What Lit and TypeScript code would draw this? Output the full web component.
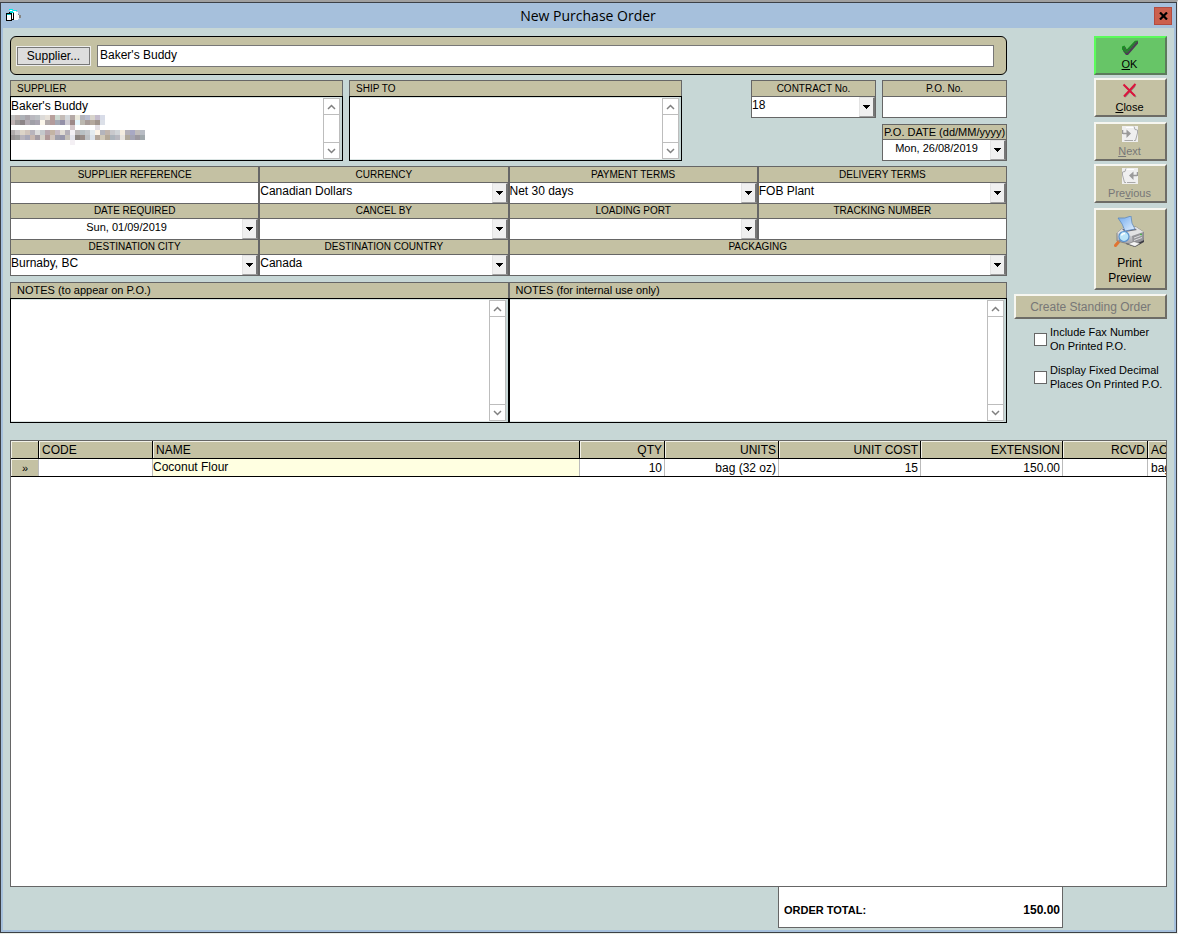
import { LitElement, html, css, svg, nothing } from "lit";
import { customElement, property } from "lit/decorators.js";

const arrow = html`<svg class="tri" width="7" height="4" viewBox="0 0 7 4" shape-rendering="crispEdges" aria-hidden="true"><path d="M0 0h7v1H0zM1 1h5v1H1zM2 2h3v1H2zM3 3h1v1H3z" fill="#000" /></svg>`;

const fieldBase = css`
  :host { display: block; font: 12px/14px "Liberation Sans", Arial, sans-serif; color: #000; }
  * { box-sizing: border-box; }
  input, select, textarea, button { font: inherit; color: inherit; margin: 0; border: 0; border-radius: 0; outline: 0; background: none; }
`;

/** Captioned single-line field: plain text, combo box or date box. */
@customElement("po-field")
export class PoField extends LitElement {
  @property() label = "";
  @property() value = "";
  @property() kind: "text" | "combo" | "date" = "text";
  static styles = [fieldBase, css`
    .cell { border: 1px solid #666; border-bottom: 0; background: #fff; height: 100%; display: flex; flex-direction: column; }
    label { display: block; flex: 1; min-height: 14px; padding-top: var(--caption-pad, 0); background: #c4c1a3; border-bottom: 1px solid #666; font-size: 10px; line-height: 14px; text-align: center; white-space: nowrap; }
    .mixed { font-size: 11px; }
    .line { display: flex; height: 20px; position: relative; }
    input, select { flex: 1; min-width: 0; width: 100%; height: 20px; padding: 0 0 4px 0; appearance: none; }
    .date { text-align: center; font-size: 11px; padding-bottom: 5px; }
    .drop { width: 16px; height: 20px; padding: 0; background: #f0f0f0; border: 1px solid #e3e3e3; border-right: 2px solid #777; border-bottom-color: #a0a0a0; display: grid; place-items: center; }
    .over { position: absolute; right: 0; top: 0; pointer-events: none; }
  `];
  render() {
    const cap = html`<label for="f" class=${/[a-z]{3}/.test(this.label) ? "mixed" : ""}>${this.label}</label>`;
    let body;
    if (this.kind === "combo") body = html`<select id="f"><option>${this.value}</option></select><span class="drop over">${arrow}</span>`;
    else if (this.kind === "date") body = html`<input id="f" class="date" .value=${this.value} /><button class="drop" type="button" aria-label="Open calendar">${arrow}</button>`;
    else body = html`<input id="f" .value=${this.value} />`;
    return html`<div class="cell">${cap}<div class="line">${body}</div></div>`;
  }
}

/** Captioned multi-line box with its own scroll bar. */
@customElement("po-memo")
export class PoMemo extends LitElement {
  @property() label = "";
  @property() value = "";
  @property({ type: Boolean }) mixed = false;
  static styles = [fieldBase, css`
    :host { display: flex; flex-direction: column; }
    label { display: block; height: 16px; padding-left: 6px; background: #c4c1a3; border: 1px solid #666; border-bottom: 0; font-size: 10px; line-height: 15px; }
    .mixed { font-size: 11px; }
    .box { flex: 1; display: flex; position: relative; border: 1px solid #000; background: #fff; padding: 1px 0; box-shadow: inset -2px 0 #c7d7d6, inset 0 1px #dbe5e4, inset 0 -1px #dbe5e4; }
    textarea { flex: 1; min-width: 0; padding: 1px 0 0 0; resize: none; overflow: hidden; line-height: 15px; }
    .bar { width: 17px; margin-right: 2px; border: 1px solid #bdbdbd; display: flex; flex-direction: column; justify-content: space-between; background: #fff; }
    .bar button { height: 16px; padding: 0; display: grid; place-items: center; border-bottom: 1px solid #bdbdbd; }
    .bar .down { border-bottom: 0; border-top: 1px solid #bdbdbd; }
    ::slotted(svg) { position: absolute; left: 0; top: 18px; }
  `];
  render() {
    const chev = (d: string) => html`<svg width="9" height="6" viewBox="0 0 9 6"><path d=${d} fill="none" stroke="#808080" stroke-width="1.5" /></svg>`;
    return html`<label for="m" class=${this.mixed ? "mixed" : ""}>${this.label}</label>
      <div class="box"><textarea id="m" .value=${this.value}></textarea>
        <div class="bar"><button type="button" aria-label="Scroll up">${chev("M1 5L4.5 1.5L8 5")}</button><button class="down" type="button" aria-label="Scroll down">${chev("M1 1L4.5 4.5L8 1")}</button></div>
        <slot></slot></div>`;
  }
}

const mosaicRows: [number, string][] = [
  [0, "bdbdbd b8b0ae aeb2b8 a9a5ab bab9c0 bcc0c4 dcdad8 e6e0d8 b8a09c ccd8d0 c4bcb8 d3d8dc b5a9a6 ebe9dc b4b4bc b9bdd0 d8d4cc c4bccc d8dce8"],
  [5, "c0b4b4 9c9898 8d8588 b4acb4 a0a0a8 a8a4b0 fbf7ec b0a8a8 b49c9c a4a8b4 9490a8 d0ccd4 9c8888 e4f4fc bcb8b0 a89c98 b4a89c a0948c dce0e8"],
  [10, "- - - - - - - - - - - - d4c8cc - - - - e4e0e4 -"],
  [15, "b0acac c8c4c4 dcd4c8 d0c4bc b8b4bc dcdcdc c4c8cc b8a8b0 c4b4a4 c8bcc4 e0dcd4 b4b0b8 f4f0f4 bcb8b8 b8c0c4 c4c8cc e4ecf0 fcf4e8 b4b4bc c0b4ac c8c8cc d0d4d8 f4ece0 b4b0b8 a8a8c4 c0bcbc b8bcc4"],
  [20, "989494 9c9c9c b8b4bc a8a8b8 c8b8b0 a49ca4 d4d0c8 b09898 d0c4bc a0a0ac 9898ac c4c0b8 e4e4ec 8c8480 988c88 bcc0c4 dce4ec b4a89c d0c8b8 b4a898 acb4bc b8b8c0 e8e4e0 b0a89c a4a4b4 9c98a0 a0a8ac"],
  [25, "- - - - - - - - - - - - f4f0f4"],
];
const mosaic = html`<svg width="135" height="30" viewBox="0 0 135 30" shape-rendering="crispEdges" aria-hidden="true">${mosaicRows.map(([y, row]) =>
  row.split(" ").map((c, i) => (c === "-" ? nothing : svg`<rect x=${i * 5 - 1} y=${y} width="5" height="5" fill=${"#" + c} />`)))}</svg>`;

const iconOk = html`<svg width="18" height="16" viewBox="0 0 18 16" aria-hidden="true"><path d="M2 7L4 7L6 10L14 1.500L17 1V3.500L7 15H5L2 11Z" fill="#4f3a55" /><path d="M1 6.500L3.500 5.500L5.700 9.500L14 .8L17 .5L6.500 12.800L5 13L1 9.500Z" fill="#16911f" /><path d="M3 7.500L6 12L15 2" fill="none" stroke="#4c5b50" stroke-width="2" stroke-dasharray="1 1" /></svg>`;
const iconClose = html`<svg width="18" height="16" viewBox="0 0 18 16" aria-hidden="true"><path d="M4 4L15 15M14 4L4 15" stroke="#8d8078" stroke-width="1.5" /><path d="M2.500 2.500L14 14M14.500 2L3 14.500" stroke="#dc143c" stroke-width="2" /></svg>`;
const page = (flip: boolean) => html`<svg width="16" height="16" viewBox="0 0 16 16" aria-hidden="true"><rect width="16" height="16" fill="#efefef" /><g transform=${flip ? "translate(16 0) scale(-1 1)" : ""}><path d="M4 1.500H12" stroke="#fff" fill="none" /><path d="M12 .5L13 3.500L15.500 4V7L13.500 14.500H12M11 14.500H2.500" fill="none" stroke="#a9a9a9" /><path d="M0.500 4V8M1 7.500H5" stroke="#9a9a9a" stroke-width="1.500" fill="none" /><path d="M4.500 3.500L9 7.500L4.500 12Z" fill="#9a9a9a" /></g></svg>`;
const iconPrint = html`<svg width="32" height="32" viewBox="0 0 32 32" aria-hidden="true">
  <defs><linearGradient id="pp" x1="0" y1="0" x2="1" y2="1"><stop offset="0" stop-color="#6fa8ec" /><stop offset="1" stop-color="#e4f1ff" /></linearGradient>
  <linearGradient id="pb" x1="0" y1="0" x2="0" y2="1"><stop offset="0" stop-color="#f2f2f4" /><stop offset="1" stop-color="#a0a0a5" /></linearGradient></defs>
  <path d="M12 28L21 31L30 26V22L12 25Z" fill="#3e3e44" />
  <path d="M3 17L9 12L22 11L29.500 16V24L19 29L3 25Z" fill="url(#pb)" stroke="#77777c" stroke-width=".8" />
  <path d="M3 17L9 12L22 11L29.500 16L18 20Z" fill="#e2e2e4" /><path d="M18 20L29.500 16V24L19 29Z" fill="#95959a" />
  <path d="M20 22L28 19M20 24.500L28 21.500" stroke="#dddde0" /><path d="M26 18.500h2" stroke="#4fb04f" stroke-width="1.500" />
  <path d="M8 13L20 12L23 14L11 16Z" fill="#6c6c72" />
  <path d="M4 2Q11 3 17 0Q17 8 21 13L11 15Q9 8 4 2Z" fill="url(#pp)" stroke="#5582bb" stroke-width=".7" />
  <path d="M14 28L21 30.500L26 27.500L20 25.500Z" fill="#f5f5f5" stroke="#666" stroke-width=".5" />
  <path d="M4.500 26L1.500 29.500" stroke="#e07432" stroke-width="3" stroke-linecap="round" /><path d="M6.500 24L5 26" stroke="#8a8a8a" stroke-width="2" />
  <circle cx="10" cy="20.500" r="5" fill="#b9e6fb" fill-opacity=".95" stroke="#5b93cf" stroke-width="1.200" /><path d="M7.500 19.500Q8 17.500 11 17.500" stroke="#fff" stroke-width="1.500" fill="none" /></svg>`;
const iconForm = html`<svg width="16" height="14" viewBox="0 0 16 14" shape-rendering="crispEdges" aria-hidden="true"><path d="M4 1L12 3V11H7V5H3Z" fill="#fff" /><path d="M3 0h4v1H3zM7 1h4v1H7zM4 2h3v1H4z" fill="#0ee" /><path d="M10 3L13 6V10H10Z" fill="#f6f6f6" /><path d="M12 5h1v1h-1zM13 6h2v3h-2z" fill="#858585" /><rect x="3.500" y="3.500" width="4" height="7" fill="#fff" stroke="#000" /><rect x=".5" y="4.500" width="5" height="7" fill="#fff" stroke="#000" /><path d="M4 3h4v1H4zM1 5h4v1H1z" fill="#0cc" /></svg>`;

interface Line { code: string; name: string; qty: string; units: string; cost: string; ext: string; rcvd: string; ac: string; }

@customElement("app-root")
export class AppRoot extends LitElement {
  private lines: Line[] = [{ code: "", name: "Coconut Flour", qty: "10", units: "bag (32 oz)", cost: "15", ext: "150.00", rcvd: "", ac: "bag" }];
  static styles = [fieldBase, css`
    .window { min-height: 100vh; display: flex; flex-direction: column; background: #c7d7d6; border-top: 2px solid #a0a0a0; border-right: 1px solid #f0f0f0; border-bottom: 1px solid #e9eee6; }
    .frame { flex: 1; display: flex; flex-direction: column; border: 1px solid #3c4046; box-shadow: inset 2px 0 #a6c0dc, inset -2px 0 #a6c0dc, inset 0 -2px #a6c0dc; }
    .title { height: 25px; padding: 4px; padding-left: 5px; display: flex; align-items: center; background: #a6c0dc; }
    h1 { flex: 1; margin: 0; text-align: center; font: 400 14px/20px "Open Sans", "Noto Sans", sans-serif; }
    .exit { width: 18px; height: 18px; padding: 0; background: #cb604e; border: 1px solid #b34a40; display: grid; place-items: center; }
    main { flex: 1; display: flex; flex-direction: column; padding: 8px 9px 4px; }
    .top { display: grid; grid-template-columns: minmax(0, 1fr) 153px; gap: 7px; }
    .search { height: 39px; display: flex; align-items: center; gap: 7px; padding: 0 12px 0 6px; background: #c4c1a3; border: 1px solid #000; border-radius: 6px; margin-bottom: 5px; }
    .pick { width: 73px; height: 18px; padding: 0; background: #ddd; border: 1px solid #777; box-shadow: 0 0 0 1px #eee; }
    .search input { flex: 1; min-width: 0; height: 22px; padding: 0 2px 1px; background: #fff; border: 1px solid #777; }
    .address { display: flex; gap: 6px; margin-bottom: 5px; }
    .address po-memo { flex: 1; height: 81px; }
    .numbers { display: grid; grid-template-columns: 125px 125px; column-gap: 6px; row-gap: 6px; margin-left: 63px; align-content: start; }
    .numbers po-field { border-bottom: 1px solid #666; height: 38px; --caption-pad: 1px; }
    .numbers .when { grid-column: 2; height: 37px; --caption-pad: 0; }
    .fields { display: grid; grid-template-columns: repeat(4, 1fr); grid-template-rows: 37px 36px 36px; border-bottom: 1px solid #666; margin-bottom: 6px; }
    .first { --caption-pad: 1px; }
    .wide { grid-column: span 2; }
    .notes { display: grid; grid-template-columns: 1fr 1fr; height: 141px; }
    .side { display: flex; flex-direction: column; align-items: flex-end; }
    .cmd { width: 73px; height: 39px; padding: 2px 2px 0 0; display: flex; flex-direction: column; align-items: center; gap: 3px; background: #c4c1a3; border: 2px solid; border-color: #f6f6f0 #6d6c66 #6d6c66 #f6f6f0; font-size: 11px; line-height: 13px; }
    .cmd svg { flex: none; }
    .ok { gap: 2px; background: #67c567; border-color: #5bfb5b #5c7a5c #5c7a5c #5bfb5b; margin-bottom: 3px; }
    .close { margin-bottom: 5px; }
    .next { margin-bottom: 3px; }
    .prev { margin-bottom: 5px; }
    .cmd:disabled, .standing:disabled { color: #777; }
    .print { height: 82px; padding-top: 6px; gap: 8px; font-size: 12px; line-height: 15px; margin-bottom: 4px; }
    .standing { width: 100%; height: 25px; padding: 0; background: #c4c1a3; border: 2px solid; border-color: #f6f6f0 #6d6c66 #6d6c66 #f6f6f0; margin-bottom: 6px; }
    .option { width: 133px; display: flex; align-items: center; gap: 3px; font-size: 11px; line-height: 14px; margin-bottom: 10px; white-space: nowrap; }
    .option input { appearance: none; flex: none; width: 13px; height: 13px; background: #fff; border: 1px solid #666; }
    .lines { flex: 1; margin-top: 17px; overflow: hidden; background: #fff; border: 1px solid #666; }
    table { width: 100%; table-layout: fixed; border-collapse: separate; border-spacing: 0; border-bottom: 1px solid #000; }
    th { height: 18px; padding: 1px 2px 0 3px; font-weight: 400; line-height: 16px; text-align: left; background: #c4c1a3; border-right: 1px solid #000; border-bottom: 1px solid #000; box-shadow: inset 1px 1px #f2f1e8; overflow: hidden; white-space: nowrap; }
    td { height: 17px; padding: 1px 2px 0 3px; line-height: 16px; border-right: 1px solid #bbb; overflow: hidden; white-space: nowrap; }
    th:last-child, td:last-child { padding-right: 0; border-right: 0; text-overflow: clip; }
    .num { text-align: right; }
    .mark { background: #c4c1a3; text-align: center; font-size: 11px; box-shadow: inset 1px 1px #f2f1e8; }
    .name { background: #ffffe1; padding: 0; }
    .name input { display: block; width: 100%; height: 17px; padding: 0 0 1px; }
    .c0 { width: 28px; } .c1 { width: 114px; } .c3 { width: 85px; } .c4 { width: 142px; } .c5 { width: 18px; }
    .total { align-self: flex-end; width: 285px; height: 41px; margin-right: 104px; padding: 6px 2px 0 5px; display: flex; justify-content: space-between; align-items: center; background: #fff; border: 1px solid #666; border-top: 0; font-weight: 700; }
    .total span { font-size: 11px; }
  `];
  render() {
    return html`<div class="window"><div class="frame">
      <header class="title">${iconForm}<h1>New Purchase Order</h1><button class="exit" aria-label="Close window"><svg width="9" height="8" viewBox="0 0 9 8"><path d="M1 0.500L8 7.500M8 0.500L1 7.500" stroke="#000" stroke-width="2.200" /></svg></button></header>
      <main>
        <div class="top">
          <div>
            <div class="search"><button class="pick" id="pick">Supplier...</button><input aria-labelledby="pick" .value=${"Baker's Buddy"} /></div>
            <div class="address">
              <po-memo label="SUPPLIER" .value=${"Baker's Buddy"}>${mosaic}</po-memo>
              <po-memo label="SHIP TO"></po-memo>
              <div class="numbers">
                <po-field label="CONTRACT No." kind="combo" value="18"></po-field>
                <po-field label="P.O. No."></po-field>
                <po-field class="when" label="P.O. DATE (dd/MM/yyyy)" kind="date" value="Mon, 26/08/2019"></po-field>
              </div>
            </div>
            <div class="fields">
              <po-field class="first" label="SUPPLIER REFERENCE"></po-field>
              <po-field class="first" label="CURRENCY" kind="combo" value="Canadian Dollars"></po-field>
              <po-field class="first" label="PAYMENT TERMS" kind="combo" value="Net 30 days"></po-field>
              <po-field class="first" label="DELIVERY TERMS" kind="combo" value="FOB Plant"></po-field>
              <po-field label="DATE REQUIRED" kind="date" value="Sun, 01/09/2019"></po-field>
              <po-field label="CANCEL BY" kind="date"></po-field>
              <po-field label="LOADING PORT" kind="combo"></po-field>
              <po-field label="TRACKING NUMBER"></po-field>
              <po-field label="DESTINATION CITY" kind="combo" value="Burnaby, BC"></po-field>
              <po-field label="DESTINATION COUNTRY" kind="combo" value="Canada"></po-field>
              <po-field class="wide" label="PACKAGING" kind="combo"></po-field>
            </div>
            <div class="notes">
              <po-memo mixed label="NOTES (to appear on P.O.)"></po-memo>
              <po-memo mixed label="NOTES (for internal use only)"></po-memo>
            </div>
          </div>
          <aside class="side">
            <button class="cmd ok">${iconOk}<span><u>O</u>K</span></button>
            <button class="cmd close">${iconClose}<span><u>C</u>lose</span></button>
            <button class="cmd next" disabled>${page(false)}<span><u>N</u>ext</span></button>
            <button class="cmd prev" disabled>${page(true)}<span>Pre<u>v</u>ious</span></button>
            <button class="cmd print">${iconPrint}<span>Print<br />Preview</span></button>
            <button class="standing" disabled>Create Standing Order</button>
            <label class="option"><input type="checkbox" /><span>Include Fax Number<br />On Printed P.O.</span></label>
            <label class="option"><input type="checkbox" /><span>Display Fixed Decimal<br />Places On Printed P.O.</span></label>
          </aside>
        </div>
        <div class="lines"><table>
          <colgroup><col class="c0" /><col class="c1" /><col /><col class="c3" /><col class="c1" /><col class="c4" /><col class="c4" /><col class="c3" /><col class="c5" /></colgroup>
          <thead><tr><th></th><th>CODE</th><th>NAME</th><th class="num">QTY</th><th class="num">UNITS</th><th class="num">UNIT COST</th><th class="num">EXTENSION</th><th class="num">RCVD</th><th>AC</th></tr></thead>
          <tbody>${this.lines.map((l) => html`<tr><td class="mark">»</td><td>${l.code}</td><td class="name"><input aria-label="Name" .value=${l.name} /></td><td class="num">${l.qty}</td><td class="num">${l.units}</td><td class="num">${l.cost}</td><td class="num">${l.ext}</td><td class="num">${l.rcvd}</td><td>${l.ac}</td></tr>`)}</tbody>
        </table></div>
        <div class="total"><span>ORDER TOTAL:</span><b>150.00</b></div>
      </main></div></div>`;
  }
}
